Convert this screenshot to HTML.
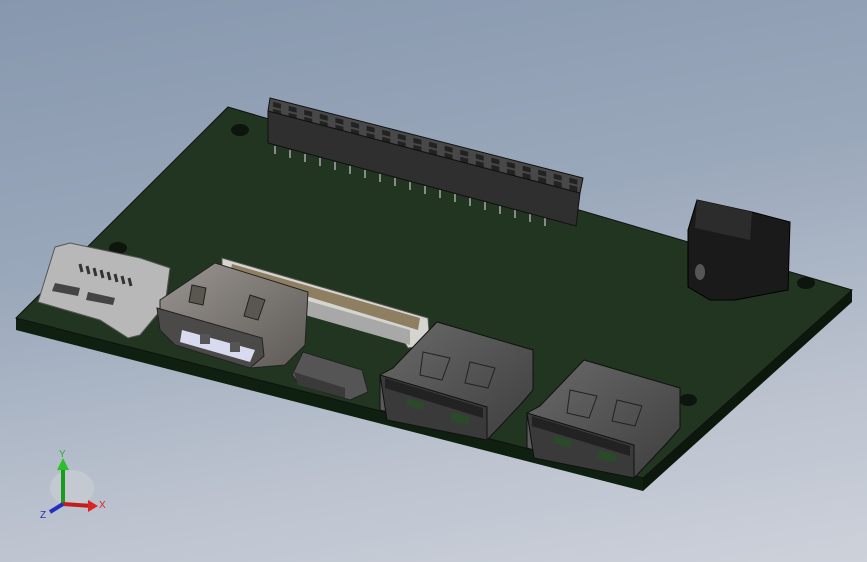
<!DOCTYPE html>
<html><head><style>
html,body{margin:0;padding:0;width:867px;height:562px;overflow:hidden}
body{background:linear-gradient(170deg,#8797ad 0%,#9aa8bb 40%,#bcc3cf 75%,#cdd1da 100%)}
svg{position:absolute;left:0;top:0}
text{font-family:"Liberation Sans",sans-serif;font-size:10px}
</style></head><body>
<svg width="867" height="562" viewBox="0 0 867 562">
<defs>
<linearGradient id="usb" x1="0" y1="0" x2="1" y2="1"><stop offset="0" stop-color="#6a6a6a"/><stop offset="1" stop-color="#3e3e3e"/></linearGradient>
<linearGradient id="hd" x1="0" y1="0" x2="1" y2="1"><stop offset="0" stop-color="#9a9590"/><stop offset="1" stop-color="#5e5a56"/></linearGradient>
<pattern id="holes" width="15.6" height="16" patternUnits="userSpaceOnUse" patternTransform="matrix(1,0.256,0,1,270,100)">
<rect width="15.6" height="16" fill="#484848"/>
<rect x="3" y="1" width="8" height="5" fill="#222"/>
<rect x="3" y="8" width="8" height="5" fill="#222"/>
</pattern>
</defs>
<!-- board -->
<polygon points="16,318 643,478 643,491 16,330" fill="#0f1f10"/>
<polygon points="643,478 852,290 852,302 643,491" fill="#0c180c"/>
<polygon points="228,107 852,290 643,478 16,318" fill="#213521" stroke="#111" stroke-width="1"/>
<ellipse cx="240" cy="130" rx="9" ry="6" fill="#0d150d"/>
<ellipse cx="118" cy="248" rx="9" ry="6" fill="#0d150d"/>
<ellipse cx="806" cy="283" rx="9" ry="6" fill="#0d150d"/>
<ellipse cx="688" cy="400" rx="9" ry="6" fill="#0d150d"/>
<!-- header -->
<path d="M275,146 v8 M290,150 v8 M305,154 v8 M320,158 v8 M335,162 v8 M350,166 v8 M365,170 v8 M380,174 v8 M395,178 v8 M410,182 v8 M425,186 v8 M440,190 v8 M455,194 v8 M470,198 v8 M485,202 v8 M500,206 v8 M515,210 v8 M530,214 v8 M545,218 v8" stroke="#aaa" stroke-width="1.5"/>
<polygon points="268,111 580,193 576,226 268,143" fill="#2f2f2f" stroke="#111"/>
<polygon points="270,98 583,178 580,193 268,111" fill="url(#holes)" stroke="#111"/>
<!-- DC jack -->
<polygon points="697,200 752,212 790,222 788,290 735,300 710,300 688,287 688,230" fill="#1a1a1a" stroke="#000"/>
<polygon points="697,200 752,212 750,240 695,228" fill="#2c2c2c"/>
<ellipse cx="700" cy="272" rx="5" ry="8" fill="#555"/>
<!-- SD slot -->
<polygon points="55,247 70,243 140,258 170,268 165,305 140,335 128,338 100,320 38,302" fill="#b8b8b8" stroke="#555"/>
<g stroke="#333" stroke-width="3"><path d="M80,264 l2,8 M87,266 l2,8 M94,268 l2,8 M101,270 l2,8 M108,272 l2,8 M115,274 l2,8 M122,276 l2,8 M129,278 l2,8"/></g>
<polygon points="55,283 80,288 78,296 52,291" fill="#444"/>
<polygon points="88,292 115,298 113,305 86,300" fill="#444"/>
<!-- FPC connector -->
<polygon points="222,258 428,318 430,345 408,348 400,335 300,300 222,270" fill="#d6d4cf" stroke="#555"/>
<polygon points="232,264 420,318 418,330 230,273" fill="#8e7f62"/>
<polygon points="305,300 410,330 410,345 305,315" fill="#a8a8a8"/>
<!-- HDMI -->
<polygon points="160,300 215,263 308,292 305,345 285,365 250,368 160,330" fill="url(#hd)" stroke="#222"/>
<polygon points="157,308 262,338 264,356 250,368 175,345 160,330" fill="#4c4a48" stroke="#222"/>
<polygon points="182,330 255,350 250,362 180,342" fill="#d8dbf0"/>
<rect x="200" y="334" width="10" height="10" fill="#555"/>
<rect x="230" y="342" width="10" height="10" fill="#555"/>
<polygon points="192,285 206,288 203,305 189,302" fill="#5a5650" stroke="#222"/>
<polygon points="250,295 265,300 258,320 244,316" fill="#5a5650" stroke="#222"/>
<!-- micro USB -->
<polygon points="303,352 362,370 368,392 350,400 300,385 292,375" fill="#555" stroke="#222"/>
<polygon points="294,372 345,388 345,398 298,385" fill="#3a3a3a"/>
<!-- USB1 -->
<g id="u1">
<polygon points="437,322 533,350 533,390 520,405 487,440 380,410 380,375 393,368" fill="url(#usb)" stroke="#111"/>
<polygon points="380,375 487,407 487,440 387,420" fill="#3a3a3a" stroke="#111"/>
<polygon points="385,378 483,408 483,418 385,388" fill="#222"/>
<polygon points="408,398 425,403 423,410 406,405" fill="#2a4a2a"/>
<polygon points="452,412 470,417 468,425 450,420" fill="#2a4a2a"/>
<polygon points="423,352 450,358 442,380 420,375" fill="none" stroke="#222"/>
<polygon points="470,362 495,368 488,388 465,383" fill="none" stroke="#222"/>
</g>
<use href="#u1" transform="translate(147,38)"/>
<!-- triad -->
<ellipse cx="72" cy="488" rx="22" ry="18" fill="#c9cdd3" opacity=".7"/>
<line x1="63" y1="504" x2="63" y2="466" stroke="#1c9a1c" stroke-width="4"/>
<polygon points="57,470 63,458 69,470" fill="#2bc02b"/>
<line x1="63" y1="504" x2="92" y2="506" stroke="#c41c1c" stroke-width="4"/>
<polygon points="88,500 98,506 88,512" fill="#d22"/>
<line x1="63" y1="504" x2="50" y2="512" stroke="#2230c0" stroke-width="4"/>
<text x="59" y="457" fill="#2bb02b">Y</text>
<text x="99" y="508" fill="#d22">X</text>
<text x="40" y="518" fill="#2230c0">Z</text>
</svg>
</body></html>
